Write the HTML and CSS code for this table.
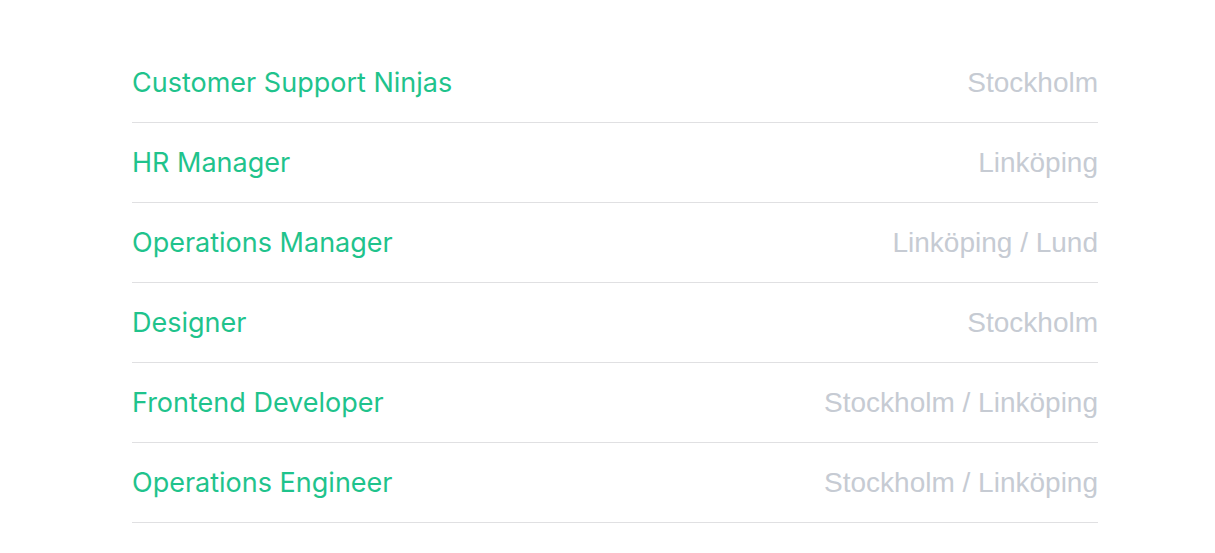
FILE: index.html
```html
<!DOCTYPE html>
<html lang="en">

<head>
    <meta charset="UTF-8">
    <meta name="viewport" content="width=device-width, initial-scale=1.0">
    <title>Jobs</title>
    <link rel="stylesheet" href="styles.css">
</head>

<body>
    <ul class="jobs">
        <li class="job"><a class="job-title" href="#">Customer Support Ninjas</a><span class="job-place">Stockholm</span></li>
        <li class="job"><a class="job-title" href="#">HR Manager</a><span class="job-place">Linköping</span></li>
        <li class="job"><a class="job-title" href="#">Operations Manager</a><span class="job-place">Linköping / Lund</span></li>
        <li class="job"><a class="job-title" href="#">Designer</a><span class="job-place">Stockholm</span></li>
        <li class="job"><a class="job-title" href="#">Frontend Developer</a><span class="job-place">Stockholm / Linköping</span></li>
        <li class="job"><a class="job-title" href="#">Operations Engineer</a><span class="job-place">Stockholm / Linköping</span></li>
    </ul>
</body>

</html>
```

FILE: styles.css
```css
body {
    margin: 0;
    padding: 43px 0 0 132px;
    background-color: #fff;
    font-family: "Liberation Sans", Arial, sans-serif;
}

.jobs {
    list-style: none;
    margin: 0;
    padding: 0;
    width: 966px;
}

.job {
    display: flex;
    justify-content: space-between;
    align-items: center;
    height: 79px;
    border-bottom: 1px solid #e0e0e2;
}

.job-title {
    font-family: Inter, "Open Sans", sans-serif;
    font-size: 27px;
    color: #1fc38c;
    text-decoration: none;
}

.job-place {
    font-size: 28px;
    color: #c6cbd3;
}
```
